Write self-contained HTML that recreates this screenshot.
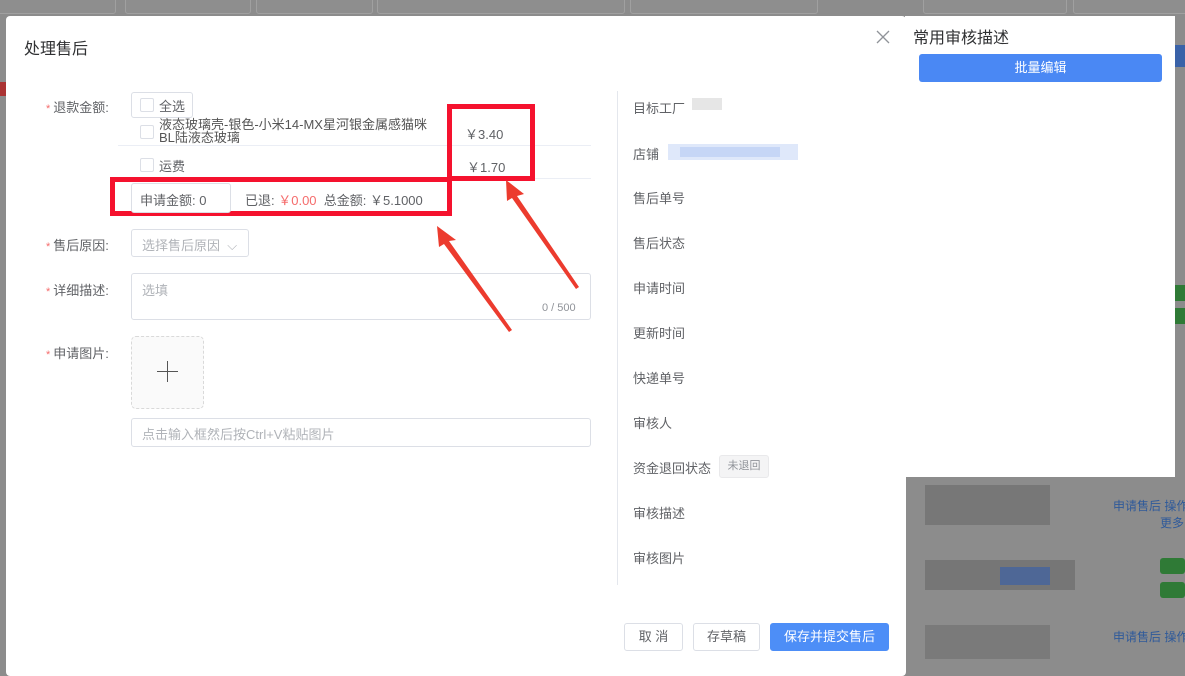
<!DOCTYPE html>
<html><head><meta charset="utf-8"><style>
body{margin:0;width:1185px;height:659px;overflow:hidden;background:#8c8c8c;font-family:"Liberation Sans","Noto Sans CJK SC",sans-serif;position:relative;color:#606266;font-size:13px}
.a{position:absolute;white-space:nowrap}
.modal{left:6px;top:16px;width:900px;height:660px;background:#fff;border-radius:4px}
.lbl{font-size:13px;color:#606266}
.lbl b{color:#f56c6c;font-weight:normal;font-size:11px;margin-right:3px}
.box{border:1px solid #dcdfe6;border-radius:3px;background:#fff}
.cb{width:12px;height:12px;border:1px solid #dcdfe6;border-radius:2px;background:#fff}
.red{border:5px solid #f5122e}
.r{font-size:13px;color:#606266}
.btn{border:1px solid #dcdfe6;border-radius:3px;background:#fff;text-align:center;line-height:26px;font-size:13px;color:#606266}
.tb{position:absolute;top:-4px;height:16px;border:1px solid #a0a0a0;border-radius:3px;background:#8e8e8e}
</style></head><body>
<div class="tb" style="left:-4px;width:118px"></div>
<div class="tb" style="left:125px;width:124px"></div>
<div class="tb" style="left:256px;width:115px"></div>
<div class="tb" style="left:377px;width:246px"></div>
<div class="tb" style="left:630px;width:186px"></div>
<div class="tb" style="left:923px;width:142px"></div>
<div class="tb" style="left:1073px;width:120px"></div>
<div class="a" style="left:0;top:82px;width:6px;height:14px;background:#a33"></div>
<div class="a" style="left:1175px;top:45px;width:10px;height:22px;background:#3a62a8"></div>
<div class="a" style="left:925px;top:485px;width:125px;height:40px;background:#777"></div>
<div class="a" style="left:925px;top:560px;width:150px;height:30px;background:#767676"></div>
<div class="a" style="left:1000px;top:567px;width:50px;height:18px;background:#4e6796"></div>
<div class="a" style="left:925px;top:625px;width:125px;height:34px;background:#7a7a7a"></div>
<div class="a" style="left:1113px;top:497px;font-size:12px;color:#2f5a9a">申请售后 操作</div>
<div class="a" style="left:1160px;top:514px;font-size:12px;color:#2f5a9a">更多</div>
<div class="a" style="left:1113px;top:628px;font-size:12px;color:#2f5a9a">申请售后 操作</div>
<div class="a" style="left:1160px;top:558px;width:25px;height:16px;background:#2f7a36;border-radius:3px"></div>
<div class="a" style="left:1160px;top:582px;width:25px;height:16px;background:#2f7a36;border-radius:3px"></div>
<div class="a" style="left:1172px;top:285px;width:13px;height:16px;background:#2f7a36"></div>
<div class="a" style="left:1172px;top:308px;width:13px;height:16px;background:#2f7a36"></div>

<div class="a modal"></div>
<div class="a" style="left:24px;top:35px;font-size:16px;color:#303133">处理售后</div>
<svg class="a" style="left:876px;top:30px" width="14" height="14"><path d="M1 1L13 13M13 1L1 13" stroke="#909399" stroke-width="1.3"/></svg>

<div class="a lbl" style="left:46px;top:97px"><b>*</b>退款金额:</div>
<div class="a box" style="left:131px;top:92px;width:60px;height:24px"></div>
<div class="a cb" style="left:140px;top:98px"></div>
<div class="a r" style="left:159px;top:96px">全选</div>
<div class="a cb" style="left:140px;top:125px"></div>
<div class="a r" style="left:159px;top:118px;line-height:13px;color:#555">液态玻璃壳-银色-小米14-MX星河银金属感猫咪<br>BL陆液态玻璃</div>
<div class="a" style="left:118px;top:145px;width:473px;height:1px;background:#ebeef5"></div>
<div class="a cb" style="left:140px;top:158px"></div>
<div class="a r" style="left:159px;top:156px">运费</div>
<div class="a r" style="left:465px;top:124px">￥3.40</div>
<div class="a r" style="left:467px;top:157px">￥1.70</div>
<div class="a" style="left:395px;top:178px;width:196px;height:1px;background:#ebeef5"></div>
<div class="a red" style="left:447px;top:104px;width:78px;height:67px"></div>
<div class="a red" style="left:110px;top:177px;width:332px;height:29px"></div>
<div class="a box" style="left:131px;top:183px;width:98px;height:28px"></div>
<div class="a r" style="left:140px;top:190px">申请金额: 0</div>
<div class="a r" style="left:245px;top:190px">已退: <span style="color:#f56c6c">￥0.00</span>&nbsp; 总金额: ￥5.1000</div>

<div class="a lbl" style="left:46px;top:235px"><b>*</b>售后原因:</div>
<div class="a box" style="left:131px;top:229px;width:116px;height:26px"></div>
<div class="a" style="left:142px;top:235px;color:#b0b3b8">选择售后原因&nbsp; ⌵</div>
<div class="a lbl" style="left:46px;top:280px"><b>*</b>详细描述:</div>
<div class="a box" style="left:131px;top:273px;width:458px;height:45px"></div>
<div class="a" style="left:142px;top:280px;color:#b0b3b8">选填</div>
<div class="a" style="left:542px;top:302px;color:#909399;font-size:11px">0 / 500</div>
<div class="a lbl" style="left:46px;top:343px"><b>*</b>申请图片:</div>
<div class="a" style="left:131px;top:336px;width:71px;height:71px;border:1px dashed #d9d9d9;border-radius:5px;background:#fafafa"></div>
<div class="a" style="left:157px;top:371px;width:21px;height:1px;background:#555"></div>
<div class="a" style="left:167px;top:361px;width:1px;height:21px;background:#555"></div>
<div class="a box" style="left:131px;top:418px;width:458px;height:27px"></div>
<div class="a" style="left:142px;top:424px;color:#b0b3b8">点击输入框然后按Ctrl+V粘贴图片</div>

<svg class="a" style="left:0;top:0" width="1185" height="659">
<polygon points="437,226 456,240 449,241 512,330 509,332 444,244 439,247" fill="#ec3b2e"/>
<polygon points="506,180 524,194 517,196 579,287 576,289 512,198 507,201" fill="#ec3b2e"/>
</svg>

<div class="a" style="left:617px;top:91px;width:1px;height:494px;background:#e4e7ed"></div>
<div class="a r" style="left:633px;top:98px">目标工厂</div>
<div class="a" style="left:692px;top:98px;width:30px;height:12px;background:#e6e6e6"></div>
<div class="a r" style="left:633px;top:144px">店铺</div>
<div class="a" style="left:668px;top:144px;width:130px;height:16px;background:#dfe8fa"></div>
<div class="a" style="left:680px;top:147px;width:100px;height:10px;background:#c6d6f6"></div>
<div class="a r" style="left:633px;top:188px">售后单号</div>
<div class="a r" style="left:633px;top:233px">售后状态</div>
<div class="a r" style="left:633px;top:278px">申请时间</div>
<div class="a r" style="left:633px;top:323px">更新时间</div>
<div class="a r" style="left:633px;top:368px">快递单号</div>
<div class="a r" style="left:633px;top:413px">审核人</div>
<div class="a r" style="left:633px;top:458px">资金退回状态</div>
<div class="a" style="left:719px;top:455px;width:48px;height:21px;background:#f4f4f5;border:1px solid #e9e9eb;border-radius:3px;font-size:11px;color:#909399;text-align:center;line-height:21px">未退回</div>
<div class="a r" style="left:633px;top:503px">审核描述</div>
<div class="a r" style="left:633px;top:548px">审核图片</div>

<div class="a btn" style="left:624px;top:623px;width:57px">取 消</div>
<div class="a btn" style="left:693px;top:623px;width:65px">存草稿</div>
<div class="a btn" style="left:770px;top:623px;width:117px;background:#4d8ef7;border-color:#4d8ef7;color:#fff">保存并提交售后</div>

<div class="a" style="left:905px;top:16px;width:270px;height:461px;background:#fff"></div>
<div class="a" style="left:913px;top:24px;font-size:16px;color:#303133">常用审核描述</div>
<div class="a" style="left:919px;top:54px;width:243px;height:28px;background:#4a88f4;border-radius:3px;color:#fff;text-align:center;line-height:28px;font-size:13px">批量编辑</div>
</body></html>
